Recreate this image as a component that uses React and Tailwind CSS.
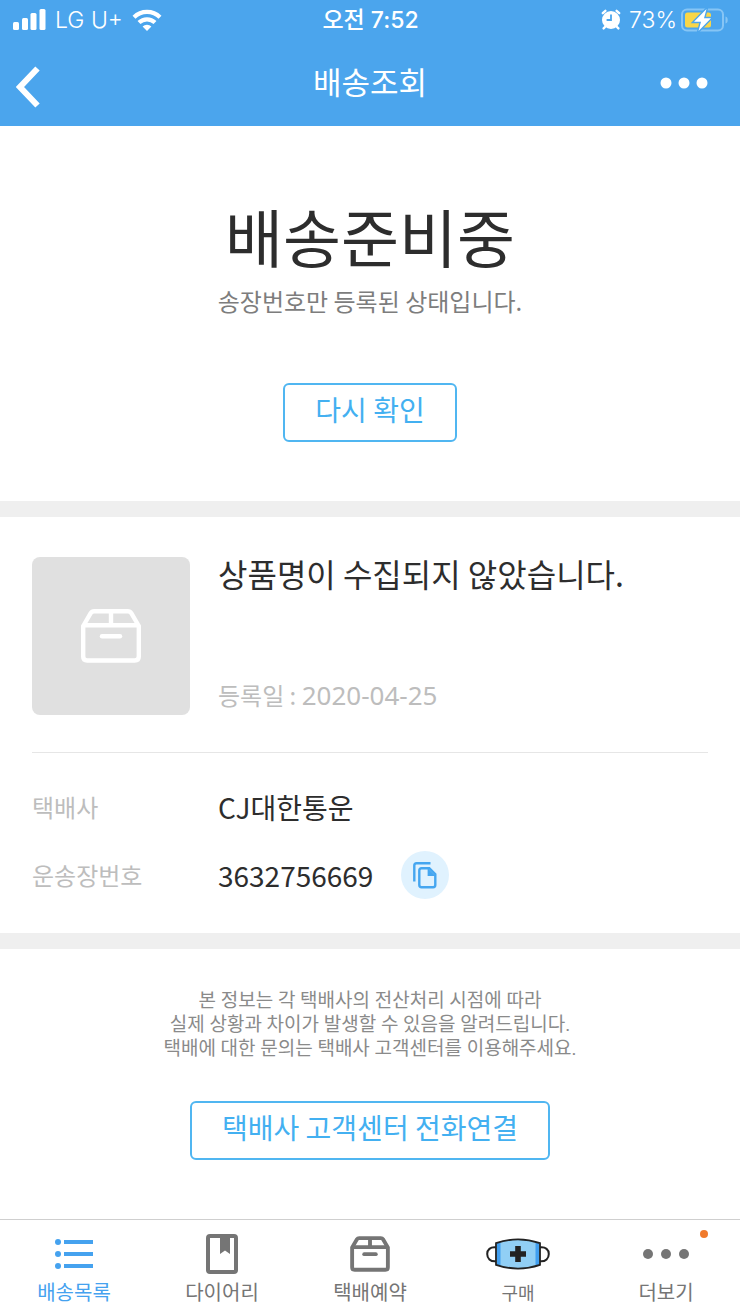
const tabs = [
    { label: '배송목록', icon: ListIcon, active: true },
    { label: '다이어리', icon: DiaryIcon },
    { label: '택배예약', icon: BoxTabIcon },
    { label: '구매', icon: MaskIcon, small: true },
    { label: '더보기', icon: MoreIcon, badge: true },
];

function SignalIcon() {
    return (
        <svg width="33" height="22" viewBox="0 0 33 22" fill="currentColor" aria-hidden="true">
            <rect x="0" y="13" width="6" height="8" rx="1.5" />
            <rect x="9" y="9" width="6" height="12" rx="1.5" />
            <rect x="17.5" y="4" width="6" height="17" rx="1.5" />
            <rect x="26.5" y="0" width="6" height="21" rx="1.5" />
        </svg>
    );
}

function WifiIcon() {
    return (
        <svg width="30" height="22" viewBox="0 0 30 22" fill="none" stroke="currentColor" strokeWidth="4.2" aria-hidden="true">
            <path d="M2 8.2a18.5 18.5 0 0 1 26 0" />
            <path d="M7 13.6a11.5 11.5 0 0 1 16 0" />
            <path d="M15 22l-4.4-4.4a6.4 6.4 0 0 1 8.8 0z" fill="currentColor" stroke="none" />
        </svg>
    );
}

function AlarmIcon() {
    return (
        <svg width="20" height="22" viewBox="0 0 20 22" aria-hidden="true">
            <path d="M1.8 4.2l2.6-2.4M18.2 4.2l-2.6-2.4M4.5 17.5l-1.9 1.9M15.5 17.5l1.9 1.9" stroke="white" strokeWidth="2.4" strokeLinecap="round" />
            <circle cx="10" cy="11" r="9" fill="white" />
            <path d="M10 5.5V11H5.6" fill="none" stroke="#4ba5ed" strokeWidth="1.8" />
        </svg>
    );
}

function BatteryIcon() {
    return (
        <svg width="47" height="24" viewBox="0 0 47 24" aria-hidden="true">
            <rect x="1" y="1.5" width="41" height="21" rx="5" fill="none" stroke="#86c5f5" strokeWidth="2" />
            <path d="M44.5 8.5c1.7.4 2.2 1.8 2.2 3.5s-.5 3.1-2.2 3.5z" fill="#86c5f5" />
            <rect x="4" y="4.5" width="26" height="15" rx="2.5" fill="#f8d648" />
            <path d="M25.5 1L13 13.8h7L17.5 23 30 10.2h-7z" fill="white" stroke="#4ba5ed" strokeWidth="2.8" paintOrder="stroke" />
        </svg>
    );
}

function BoxShape() {
    return (
        <>
            <path d="M2.2 17v30.5q0 4 4 4h47.6q4 0 4-4V17L50.3 4.2q-1.2-2-3.5-2H13.2q-2.3 0-3.5 2z" />
            <path d="M3 16.3h54M30 3v13" />
            <path d="M21 27.3h18" strokeLinecap="round" />
        </>
    );
}

function CopyIcon() {
    return (
        <svg width="24" height="27" viewBox="0 0 24 27" aria-hidden="true">
            <path d="M1.3 19.5V3.5q0-2.2 2.2-2.2H17.5" fill="none" stroke="#45a6f0" strokeWidth="2.4" />
            <path d="M8.5 6.2h7.8l6 6V23q0 2.200-2.200 2.200H8.500q-2.200 0-2.200-2.200V8.400q0-2.200 2.200-2.200z" fill="none" stroke="#45a6f0" strokeWidth="2.4" />
            <path d="M14.6 6v8h8z" fill="#45a6f0" />
        </svg>
    );
}

function ListIcon() {
    return (
        <svg width="38" height="30" viewBox="0 0 38 30" fill="#45a2ef" aria-hidden="true">
            <circle cx="3" cy="3" r="3" />
            <circle cx="3" cy="15" r="3" />
            <circle cx="3" cy="27" r="3" />
            <path d="M9 1h29v4H9zM9 13h29v4H9zM9 25h29v4H9z" />
        </svg>
    );
}

function DiaryIcon() {
    return (
        <svg width="32" height="40" viewBox="0 0 32 40" aria-hidden="true">
            <rect x="2" y="2" width="28" height="36" rx="2" fill="none" stroke="#757575" strokeWidth="4" />
            <path d="M14 3h10v17l-5-3.5-5 3.5z" fill="#757575" />
        </svg>
    );
}

function BoxTabIcon() {
    return (
        <svg width="40" height="36" viewBox="-1 -1 62 56" fill="none" stroke="#757575" strokeWidth="6" aria-hidden="true">
            <BoxShape />
        </svg>
    );
}

function MaskIcon() {
    return (
        <svg width="64" height="32" viewBox="0 0 64 32" aria-hidden="true">
            <g fill="none" stroke="#222" strokeWidth="2">
                <path d="M10.500 9.500C4 8.500 1.200 12 1.200 16s2.800 8 9.300 7.200" />
                <path d="M53.500 9.500C60 8.500 62.800 12 62.800 16s-2.800 8-9.300 7.200" />
            </g>
            <path d="M10 5.200q22-7.500 44 0v21.600q-22 7.500-44 0z" fill="#91cff5" />
            <path d="M11 5v22l3.500 1V4zM53 5v22l-3.500 1V4z" fill="#419ff0" />
            <path d="M10 5.200q22-7.500 44 0v21.600q-22 7.500-44 0z" fill="none" stroke="#222" strokeWidth="1.8" />
            <path d="M29.200 8h5.600v5.200H40v5.600h-5.200V24h-5.600v-5.200H24v-5.600h5.200z" fill="#222" />
        </svg>
    );
}

function MoreIcon() {
    return (
        <svg width="46" height="10" viewBox="0 0 46 10" fill="#757575" aria-hidden="true">
            <circle cx="5" cy="5" r="5" />
            <circle cx="23" cy="5" r="5" />
            <circle cx="41" cy="5" r="5" />
        </svg>
    );
}

function Header() {
    return (
        <header className="bg-[#4ba5ed] text-white">
            <div className="grid h-10 grid-cols-3 items-center pl-[13px] pr-3 font-[Inter,'Noto_Sans_CJK_KR',sans-serif] text-[23px]">
                <div className="flex items-center gap-[9px] font-light">
                    <SignalIcon />
                    <span>LG U+</span>
                    <WifiIcon />
                </div>
                <p className="text-center font-medium">오전 7:52</p>
                <div className="flex items-center justify-end gap-1">
                    <AlarmIcon />
                    <span className="ml-1 font-light">73%</span>
                    <BatteryIcon />
                </div>
            </div>
            <div className="grid h-[86px] grid-cols-3 items-center px-4">
                <button type="button" aria-label="뒤로" className="justify-self-start pt-2">
                    <svg width="24" height="42" viewBox="0 0 24 42" fill="none" stroke="currentColor" strokeWidth="6" aria-hidden="true">
                        <path d="M21.5 2.5L4 21l17.5 18.5" />
                    </svg>
                </button>
                <h1 className="pb-1 text-center text-[31px] leading-10">배송조회</h1>
                <button type="button" aria-label="메뉴" className="justify-self-end pr-4">
                    <svg width="48" height="12" viewBox="0 0 48 12" fill="currentColor" aria-hidden="true">
                        <circle cx="6" cy="6" r="5.5" />
                        <circle cx="24" cy="6" r="5.5" />
                        <circle cx="42" cy="6" r="5.5" />
                    </svg>
                </button>
            </div>
        </header>
    );
}

function OutlineButton({ children }) {
    return (
        <button type="button" className="rounded-md border-2 border-[#50b6f1] px-[30px] pt-1 pb-[11px] text-[28px] leading-10 text-[#43b0f1]">
            {children}
        </button>
    );
}

function TabBar() {
    return (
        <nav className="mt-auto grid grid-cols-5 border-t border-[#cfcfcf] bg-white">
            {tabs.map(({ label, icon: Icon, active, small, badge }) => (
                <a key={label} href="#" className={`relative flex flex-col items-center pt-3 pb-2 ${active ? 'text-[#45a2ef]' : 'text-[#757575]'}`}>
                    <span className="flex h-11 items-center">
                        <Icon />
                    </span>
                    <span className={`leading-8 ${small ? 'text-lg' : 'text-xl'}`}>{label}</span>
                    {badge && <i className="absolute top-[10px] right-8 size-2 rounded-full bg-[#f07a2c]" />}
                </a>
            ))}
        </nav>
    );
}

export default function App() {
    return (
        <div className="flex min-h-screen flex-col bg-white font-['Noto_Sans_CJK_KR',sans-serif] text-[#2d2d2d]">
            <Header />

            <main className="flex flex-col">
                <section className="flex flex-col items-center pt-[69px] pb-[59px] text-center">
                    <h2 className="text-[63px] leading-20">배송준비중</h2>
                    <p className="mt-1.5 mb-[62px] text-2xl leading-10 text-[#7d7d7d]">송장번호만 등록된 상태입니다.</p>
                    <OutlineButton>다시 확인</OutlineButton>
                </section>

                <section className="border-y-16 border-[#efefef] px-8 pt-10 pb-[34px]">
                    <div className="flex gap-7 border-b border-[#e6e6e6] pb-[37px]">
                        <div className="flex size-[158px] shrink-0 items-center justify-center rounded-lg bg-[#e0e0e0]">
                            <svg width="60" height="54" viewBox="0 0 60 54" fill="none" stroke="white" strokeWidth="4.4" aria-hidden="true">
                                <BoxShape />
                            </svg>
                        </div>
                        <div className="flex flex-col justify-between">
                            <h3 className="text-[32px] leading-8">상품명이 수집되지 않았습니다.</h3>
                            <p className="text-2xl leading-10 text-[#bdbdbd]">
                                등록일 : <time className="font-['Noto_Sans',sans-serif] text-[26px]">2020-04-25</time>
                            </p>
                        </div>
                    </div>
                    <dl className="grid grid-cols-[158px_1fr] items-center gap-x-7 gap-y-5 pt-[30px]">
                        <dt className="text-2xl text-[#bdbdbd]">택배사</dt>
                        <dd className="text-[28px] leading-12">CJ대한통운</dd>
                        <dt className="text-2xl text-[#bdbdbd]">운송장번호</dt>
                        <dd className="flex items-center gap-7 text-[28px] leading-12">
                            3632756669
                            <button type="button" aria-label="복사" className="flex size-12 items-center justify-center rounded-full bg-[#e0f2fe]">
                                <CopyIcon />
                            </button>
                        </dd>
                    </dl>
                </section>

                <section className="flex flex-col items-center gap-10 pt-10 pb-[59px] text-center">
                    <p className="font-[Roboto,'Noto_Sans_CJK_KR',sans-serif] text-[19px] leading-6 text-[#8a8a8a]">
                        본 정보는 각 택배사의 전산처리 시점에 따라<br />
                        실제 상황과 차이가 발생할 수 있음을 알려드립니다.<br />
                        택배에 대한 문의는 택배사 고객센터를 이용해주세요.
                    </p>
                    <OutlineButton>택배사 고객센터 전화연결</OutlineButton>
                </section>
            </main>

            <TabBar />
        </div>
    );
}
